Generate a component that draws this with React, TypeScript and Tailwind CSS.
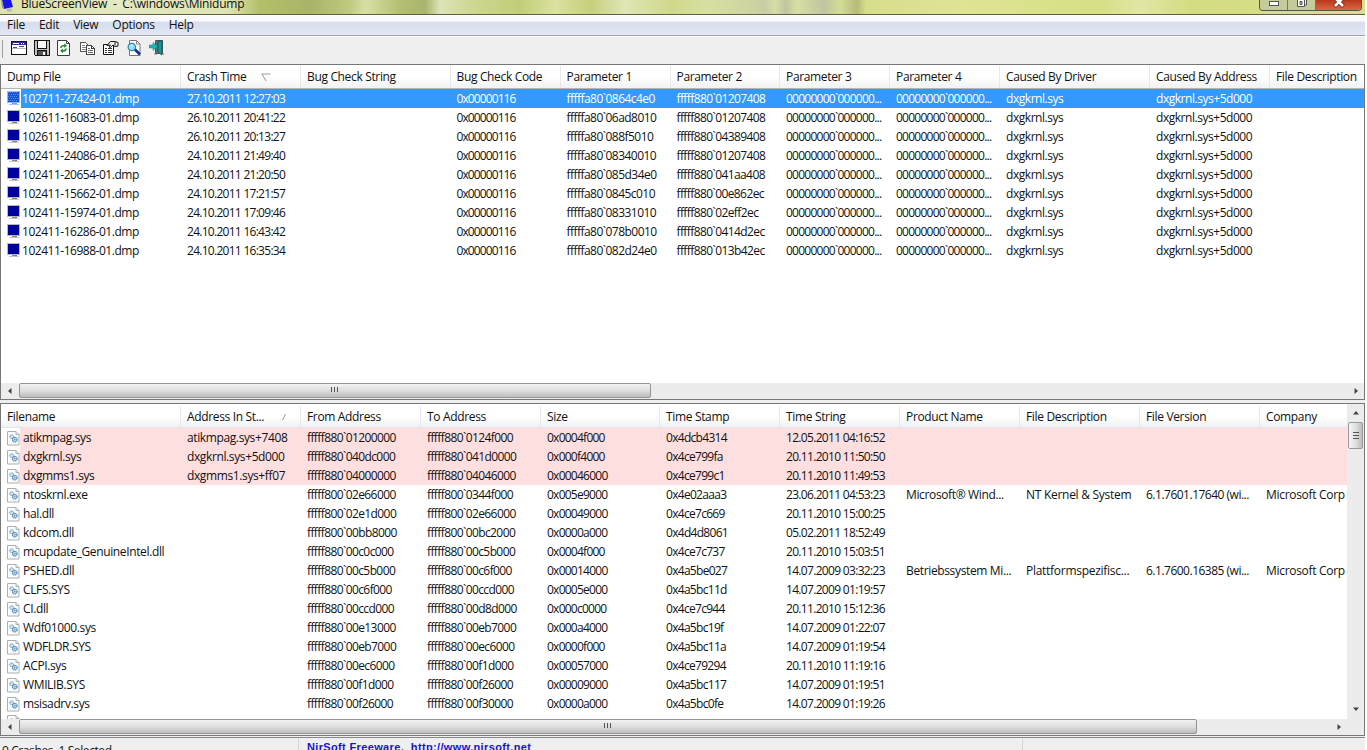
import type { ReactNode } from "react"
import { clsx } from "clsx"

type Column = { label: string; width: string; tracking: string; sort?: "down" | "slash" }

const crashColumns: Column[] = [
  { label: "Dump File", width: "w-[180px]", tracking: "tracking-[-0.48px]" },
  { label: "Crash Time", width: "w-[120px]", tracking: "tracking-[-0.72px]", sort: "down" },
  { label: "Bug Check String", width: "w-[149.5px]", tracking: "" },
  { label: "Bug Check Code", width: "w-[110px]", tracking: "tracking-[-0.9px]" },
  { label: "Parameter 1", width: "w-[110px]", tracking: "tracking-[-0.54px]" },
  { label: "Parameter 2", width: "w-[109.5px]", tracking: "tracking-[-0.6px]" },
  { label: "Parameter 3", width: "w-[110px]", tracking: "tracking-[-0.75px]" },
  { label: "Parameter 4", width: "w-[110px]", tracking: "tracking-[-0.75px]" },
  { label: "Caused By Driver", width: "w-[150px]", tracking: "tracking-[-0.45px]" },
  { label: "Caused By Address", width: "w-[120px]", tracking: "tracking-[-0.46px]" },
  { label: "File Description", width: "w-[95px]", tracking: "" },
]

const zeros = "00000000`000000..."

const crashes = [
  ["102711-27424-01.dmp", "27.10.2011 12:27:03", "fffffa80`0864c4e0", "fffff880`01207408"],
  ["102611-16083-01.dmp", "26.10.2011 20:41:22", "fffffa80`06ad8010", "fffff880`01207408"],
  ["102611-19468-01.dmp", "26.10.2011 20:13:27", "fffffa80`088f5010", "fffff880`04389408"],
  ["102411-24086-01.dmp", "24.10.2011 21:49:40", "fffffa80`08340010", "fffff880`01207408"],
  ["102411-20654-01.dmp", "24.10.2011 21:20:50", "fffffa80`085d34e0", "fffff880`041aa408"],
  ["102411-15662-01.dmp", "24.10.2011 17:21:57", "fffffa80`0845c010", "fffff880`00e862ec"],
  ["102411-15974-01.dmp", "24.10.2011 17:09:46", "fffffa80`08331010", "fffff880`02eff2ec"],
  ["102411-16286-01.dmp", "24.10.2011 16:43:42", "fffffa80`078b0010", "fffff880`0414d2ec"],
  ["102411-16988-01.dmp", "24.10.2011 16:35:34", "fffffa80`082d24e0", "fffff880`013b42ec"],
].map(([file, time, p1, p2]) => [file, time, "", "0x00000116", p1, p2, zeros, zeros, "dxgkrnl.sys", "dxgkrnl.sys+5d000", ""])

const driverColumns: Column[] = [
  { label: "Filename", width: "w-[180px]", tracking: "tracking-[-0.37px]" },
  { label: "Address In St...", width: "w-[120px]", tracking: "tracking-[-0.38px]", sort: "slash" },
  { label: "From Address", width: "w-[120px]", tracking: "tracking-[-0.6px]" },
  { label: "To Address", width: "w-[120px]", tracking: "tracking-[-0.6px]" },
  { label: "Size", width: "w-[119px]", tracking: "tracking-[-0.75px]" },
  { label: "Time Stamp", width: "w-[120px]", tracking: "tracking-[-0.7px]" },
  { label: "Time String", width: "w-[120px]", tracking: "tracking-[-0.68px]" },
  { label: "Product Name", width: "w-[120px]", tracking: "tracking-[-0.36px]" },
  { label: "File Description", width: "w-[120px]", tracking: "tracking-[-0.28px]" },
  { label: "File Version", width: "w-[120px]", tracking: "tracking-[-0.5px]" },
  { label: "Company", width: "w-[88px]", tracking: "tracking-[-0.3px]" },
]

const drivers = [
  ["atikmpag.sys", "atikmpag.sys+7408", "fffff880`01200000", "fffff880`0124f000", "0x0004f000", "0x4dcb4314", "12.05.2011 04:16:52"],
  ["dxgkrnl.sys", "dxgkrnl.sys+5d000", "fffff880`040dc000", "fffff880`041d0000", "0x000f4000", "0x4ce799fa", "20.11.2010 11:50:50"],
  ["dxgmms1.sys", "dxgmms1.sys+ff07", "fffff880`04000000", "fffff880`04046000", "0x00046000", "0x4ce799c1", "20.11.2010 11:49:53"],
  ["ntoskrnl.exe", "", "fffff800`02e66000", "fffff800`0344f000", "0x005e9000", "0x4e02aaa3", "23.06.2011 04:53:23", "Microsoft® Wind...", "NT Kernel & System", "6.1.7601.17640 (wi...", "Microsoft Corp"],
  ["hal.dll", "", "fffff800`02e1d000", "fffff800`02e66000", "0x00049000", "0x4ce7c669", "20.11.2010 15:00:25"],
  ["kdcom.dll", "", "fffff800`00bb8000", "fffff800`00bc2000", "0x0000a000", "0x4d4d8061", "05.02.2011 18:52:49"],
  ["mcupdate_GenuineIntel.dll", "", "fffff880`00c0c000", "fffff880`00c5b000", "0x0004f000", "0x4ce7c737", "20.11.2010 15:03:51"],
  ["PSHED.dll", "", "fffff880`00c5b000", "fffff880`00c6f000", "0x00014000", "0x4a5be027", "14.07.2009 03:32:23", "Betriebssystem Mi...", "Plattformspezifisc...", "6.1.7600.16385 (wi...", "Microsoft Corp"],
  ["CLFS.SYS", "", "fffff880`00c6f000", "fffff880`00ccd000", "0x0005e000", "0x4a5bc11d", "14.07.2009 01:19:57"],
  ["CI.dll", "", "fffff880`00ccd000", "fffff880`00d8d000", "0x000c0000", "0x4ce7c944", "20.11.2010 15:12:36"],
  ["Wdf01000.sys", "", "fffff880`00e13000", "fffff880`00eb7000", "0x000a4000", "0x4a5bc19f", "14.07.2009 01:22:07"],
  ["WDFLDR.SYS", "", "fffff880`00eb7000", "fffff880`00ec6000", "0x0000f000", "0x4a5bc11a", "14.07.2009 01:19:54"],
  ["ACPI.sys", "", "fffff880`00ec6000", "fffff880`00f1d000", "0x00057000", "0x4ce79294", "20.11.2010 11:19:16"],
  ["WMILIB.SYS", "", "fffff880`00f1d000", "fffff880`00f26000", "0x00009000", "0x4a5bc117", "14.07.2009 01:19:51"],
  ["msisadrv.sys", "", "fffff880`00f26000", "fffff880`00f30000", "0x0000a000", "0x4a5bc0fe", "14.07.2009 01:19:26"],
]

function MonitorIcon({ selected }: { selected?: boolean }) {
  return (
    <svg width="14" height="15" viewBox="0 0 14 15" className="shrink-0" shapeRendering="crispEdges">
      <rect x="0" y="0" width="13" height="12" fill={selected ? "#8fbcf0" : "#b9b9b9"} />
      <rect x="1" y="1" width="11" height="10" fill={selected ? "#1c50cf" : "#00009c"} />
      {selected &&
        Array.from({ length: 25 }, (_, i) => (
          <rect key={i} x={1 + (i % 5) * 2 + (Math.floor(i / 5) % 2)} y={1 + Math.floor(i / 5) * 2} width="1" height="1" fill="#4c91f5" />
        ))}
      <rect x="5" y="12" width="4" height="1" fill={selected ? "#6fa7e6" : "#888"} />
      <rect x="2" y="13" width="10" height="1" fill={selected ? "#9fc7f3" : "#c4c4c4"} />
      <rect x="8" y="12" width="2" height="1" fill={selected ? "#5e9de8" : "#777"} />
    </svg>
  )
}

function DriverIcon() {
  return (
    <svg width="13" height="16" viewBox="0 0 13 16" className="shrink-0">
      <path d="M.5 1.500h8.500l3 3v10.500H.5z" fill="#fafcfd" stroke="#a8b0b4" />
      <path d="M9 1.500v3h3" fill="#e5eaec" stroke="#a8b0b4" />
      <circle cx="4.7" cy="6.700" r="1.900" fill="#d5e6f2" stroke="#5a8db3" strokeDasharray="1.2 .5" />
      <circle cx="7.800" cy="9.700" r="2.300" fill="#c8dfef" stroke="#3d79a6" strokeWidth="1.100" strokeDasharray="1.2 .5" />
      <circle cx="7.800" cy="9.700" r=".6" fill="#3d79a6" />
    </svg>
  )
}

function ToolbarIcons() {
  return (
    <div className="flex h-[18px] items-start">
      {/* advanced options */}
      <svg width="23" height="18" viewBox="0 0 23 18" shapeRendering="crispEdges">
        <path d="M.5 1.500h15v13H.5z" fill="#fff" stroke="#111" />
        <path d="M1 2h14v3H1z" fill="#33338c" />
        <path d="M2 3h6v1H2zM10 3h1v1h-1zM12 3h1v1h-1z" fill="#fff" />
        <path d="M2 7h4v1H2zM8 6h5v1H8z" fill="#555" />
        <path d="M1 8h14v1H1z" fill="#bbb" />
      </svg>
      {/* save */}
      <svg width="23" height="18" viewBox="0 0 23 18" shapeRendering="crispEdges">
        <path d="M.5.5h15v15h-14l-1-1z" fill="#c3c3bd" stroke="#111" />
        <path d="M3.500.5h9v8h-9z" fill="#f7f7f7" stroke="#111" />
        <path d="M3.500 10.500h9v5h-9z" fill="#555" stroke="#111" />
        <path d="M9 11.500h2v3H9z" fill="#fff" />
      </svg>
      {/* refresh */}
      <svg width="23" height="18" viewBox="0 0 23 18">
        <path d="M.5.5h9l3 3v12H.5z" fill="#fff" stroke="#3c3c3c" />
        <path d="M9.500.5v3h3" fill="none" stroke="#3c3c3c" />
        <path d="M3.200 8c0-2.500 2-3.500 4-3V3.200L10 5.800 7.200 8V6.600C6 6.400 5 6.700 4.700 8z" fill="#1c8a36" />
        <path d="M9.900 8.500c0 2.500-2 3.500-4 3v1.800L3.100 10.700 5.900 8.500v1.400c1.200.2 2.200-.1 2.500-1.400z" fill="#1c8a36" />
      </svg>
      {/* copy */}
      <svg width="23" height="18" viewBox="0 0 23 18" shapeRendering="crispEdges">
        <path d="M.5 2.500h5l3 3v6h-8z" fill="#fff" stroke="#555" />
        <path d="M2 5.500h3M2 7.500h4M2 9.500h4" stroke="#888" />
        <path d="M6.500 5.500h5l3 3v6h-8z" fill="#fff" stroke="#444" />
        <path d="M11.500 5.500v3h3" fill="none" stroke="#444" />
        <path d="M8 8.500h2M8 10.500h5M8 12.500h5" stroke="#666" />
      </svg>
      {/* properties */}
      <svg width="24" height="18" viewBox="0 0 24 18">
        <path d="M.5 4.500h10v10H.5z" fill="#fff" stroke="#111" />
        <path d="M2 8.500h2M5 8.500h4M2 10.500h2M5 10.500h4M2 12.500h2M5 12.500h4" stroke="#333" />
        <path d="M4 5.500 7.500 1.500h4l3.500 1v3.500l-3 .5-2-1.500-2.500 2.500-1.500-.5 1.500-2z" fill="#fff" stroke="#111" />
        <path d="M12 1.500v4" stroke="#111" />
      </svg>
      {/* find */}
      <svg width="22" height="18" viewBox="0 0 22 18">
        <path d="M2.500.5h7l3.500 3.500v11.500H2.500z" fill="#fff" stroke="#777" />
        <path d="M9.500.5V4H13" fill="none" stroke="#888" />
        <circle cx="4.800" cy="7" r="3.700" fill="#8de4ee" stroke="#3682a4" strokeWidth="1.200" />
        <path d="M3.500 6.500 5.500 4.800" stroke="#fff" />
        <path d="m8 9.500 5 5" stroke="#16308f" strokeWidth="2.600" />
      </svg>
      {/* exit */}
      <svg width="17" height="18" viewBox="0 0 17 18">
        <path d="M6.500.5h7v13h-7z" fill="#4e7575" stroke="#555" />
        <path d="m9 1.500 4-1v14.500l-4-2.500z" fill="#1d9292" stroke="#0b5557" strokeWidth=".8" />
        <path d="M0 5h4V2.500l4.500 4L4 10.500V8H0z" fill="#19b5bd" stroke="#138990" strokeWidth=".5" />
        <path d="M5 14h3M13 14h2" stroke="#777" />
      </svg>
    </div>
  )
}

function HeaderRow({ columns, tinted }: { columns: Column[]; tinted?: boolean }) {
  return (
    <div
      className={clsx(
        "flex h-6 shrink-0 overflow-hidden border-b bg-linear-to-b from-white from-50% to-[#f1f2f3] tracking-[-0.34px]",
        tinted ? "border-[#e3e6ea] pt-0.5" : "border-[#b5b5b5] pt-px",
      )}
    >
      {columns.map((column) => (
        <div key={column.label} className={clsx("flex shrink-0 items-center border-r border-[#e6e8ea] pl-1.5 last:border-r-0", column.width)}>
          <span className="whitespace-pre">{column.label}</span>
          {column.sort === "down" && (
            <svg width="10" height="9" viewBox="0 0 10 9" className="ml-[15px]">
              <path d="M.5 1h9M1 1l4 7" fill="none" stroke="#999" />
            </svg>
          )}
          {column.sort === "slash" && (
            <svg width="6" height="8" viewBox="0 0 6 8" className="ml-[17px]">
              <path d="M1.500 7 4.500 1" stroke="#999" />
            </svg>
          )}
        </div>
      ))}
    </div>
  )
}

type DataRowProps = { columns: Column[]; cells: string[]; icon: ReactNode; iconGap: string; className?: string }

function DataRow({ columns, cells, icon, iconGap, className }: DataRowProps) {
  return (
    <div className={clsx("flex shrink-0 overflow-hidden", className)}>
      {columns.map((column, i) => (
        <div key={column.label} className={clsx("flex shrink-0 items-center whitespace-pre pl-1.5", column.width, column.tracking)}>
          {i === 0 && icon}
          <span className={clsx("pt-px", i === 0 && iconGap)}>{cells[i]}</span>
        </div>
      ))}
    </div>
  )
}

function Arrow({ d }: { d: string }) {
  return (
    <svg width="8" height="8" viewBox="0 0 8 8" className="shrink-0">
      <path d={d} fill="#444" />
    </svg>
  )
}

function HorizontalScrollbar({ thumb, end }: { thumb: string; end: string }) {
  return (
    <div className="flex h-4 shrink-0 items-start bg-[#ececec]">
      <div className="flex h-[15px] w-[18px] shrink-0 items-center justify-center">
        <Arrow d="M5.500 1v6L2 4z" />
      </div>
      <div
        className={clsx(
          "flex h-[15px] items-center justify-center gap-px rounded-xs border border-[#959595] bg-linear-to-b from-[#f3f3f3] via-[#dfdfdf] to-[#bdbdbd]",
          thumb,
        )}
      >
        <i className="mb-0.5 h-[5px] w-0.5 border-l border-[#555]" />
        <i className="mb-0.5 h-[5px] w-0.5 border-l border-[#555]" />
        <i className="mb-0.5 h-[5px] w-0.5 border-l border-[#555]" />
      </div>
      <div className={clsx("ml-auto flex h-[15px] items-center", end)}>
        <Arrow d="M2.500 1v6L6 4z" />
      </div>
    </div>
  )
}

function TitleBar() {
  return (
    <div className="flex h-[15px] shrink-0 justify-between overflow-hidden border-b border-[#5f5f45] bg-[linear-gradient(90deg,#dce2aa_0px,#e5e9c4_120px,#dde3b0_230px,#b4bf68_260px,#a9b468_310px,#c2c980_350px,#d9dfa4_365px,#b4bf72_400px,#a9b56c_425px,#dde3b7_440px,#ced690_475px,#c3cd78_520px,#dbe1a0_555px,#c6cf7c_590px,#e1e5b7_625px,#d0d88b_670px,#d9dfa2_710px,#cfd3a1_750px,#c8cea3_765px,#d8dda8_775px,#c0c59f_786px,#d9dea4_797px,#c0c59f_824px,#d5dc96_840px,#b5bb78_857px,#d6dd8b_866px,#dfe494_960px,#d6df85_1100px,#e2e6a5_1140px,#d4dc82_1190px,#d9e08b_1364px)]">
      <div className="flex pl-px">
        <svg width="14" height="12" viewBox="0 0 14 12">
          <path d="M1 0h9l2 7-9 2z" fill="#1414e6" />
          <path d="M0 0h1l2 9-2-1z" fill="#999" />
          <path d="m5 9 5-1 1 3-4 1z" fill="#b9b9b9" />
        </svg>
        <span className="-mt-[5px] ml-1.5 whitespace-pre text-[12px] leading-[18px] tracking-[-0.22px]">BlueScreenView  -  C:\windows\Minidump</span>
      </div>
      <div className="mr-[3px] flex h-[11px] w-[103px] overflow-hidden rounded-b border border-t-0 border-[#54573c]">
        <div className="flex w-7 justify-center border-r border-[#777a58] bg-[#c4ca98]">
          <i className="mt-px h-[5px] w-2.5 border border-[#555] bg-white" />
        </div>
        <div className="flex w-7 justify-center border-r border-[#777a58] bg-[#c4ca98]">
          <svg width="12" height="8" viewBox="0 0 12 8">
            <path d="M3.500-2h7v7h-7z" fill="#eee" stroke="#555" />
            <path d="M1.500-1h7v7.500h-7z" fill="#fff" stroke="#555" />
            <path d="M4 1.500h2v3H4z" fill="#bbb" stroke="#555" />
          </svg>
        </div>
        <div className="flex flex-1 justify-center bg-linear-to-b from-[#b9361b] to-[#dc6843]">
          <svg width="12" height="8" viewBox="0 0 12 8">
            <path d="m1.500 6.500 9-9M10.500 6.500l-9-9" stroke="#743124" strokeWidth="4" />
            <path d="m2 6 8-8M10 6 2-2" stroke="#fff" strokeWidth="2.500" />
          </svg>
        </div>
      </div>
    </div>
  )
}

export default function App() {
  return (
    <div className="h-[750px] w-[1367px] overflow-hidden bg-white font-['Open_Sans','Noto_Sans',sans-serif] text-[12px] leading-none text-[#111]">
      <div className="flex h-full w-[1365px] flex-col bg-[#f0eff0]">
        <TitleBar />
        <div className="flex h-[21px] shrink-0 items-center gap-3.5 border-y border-t-white border-b-[#9ca3b2] bg-linear-to-b from-[#fafafd] from-25% via-[#d6ddec] via-35% to-[#e2e7f3] pb-px pl-[7px] tracking-[-0.27px]">
          <span>File</span>
          <span>Edit</span>
          <span>View</span>
          <span>Options</span>
          <span>Help</span>
        </div>
        <div className="flex h-7 shrink-0 items-center border-t border-white pb-[3px] pl-0.5">
          <div className="mr-2 h-[18px] w-px bg-[#a0a0a0]" />
          <ToolbarIcons />
        </div>

        <div className="flex h-[336px] shrink-0 flex-col border border-[#777] bg-white">
          <HeaderRow columns={crashColumns} />
          {crashes.map((cells, i) => (
            <DataRow
              key={cells[0]}
              columns={crashColumns}
              cells={cells}
              icon={<MonitorIcon selected={i === 0} />}
              iconGap="pl-px"
              className={i === 0 ? "h-[19px] bg-linear-to-r from-white from-[20px] to-[#3399ff] to-[20px] text-white" : "h-[18.95px]"}
            />
          ))}
          <div className="flex-1" />
          <HorizontalScrollbar thumb="w-[632px]" end="mr-1" />
        </div>

        <div className="mt-[3px] flex h-[333px] shrink-0 flex-col border border-[#777] bg-white">
          <div className="flex min-h-0 flex-1">
            <div className="flex w-[1346px] flex-col overflow-hidden">
              <HeaderRow columns={driverColumns} tinted />
              {drivers.map((cells, i) => (
                <DataRow
                  key={cells[0]}
                  columns={driverColumns}
                  cells={cells}
                  icon={<DriverIcon />}
                  iconGap="pl-[3px]"
                  className={clsx("h-[19px]", i < 3 && "bg-linear-to-r from-white from-[19px] to-[#fddfe0] to-[19px]")}
                />
              ))}
              <div className="pt-px pl-1.5">
                <DriverIcon />
              </div>
            </div>
            <div className="flex flex-1 flex-col items-center bg-[#ececec]">
              <div className="flex h-[18px] items-center">
                <Arrow d="M1 5.500h6L4 2z" />
              </div>
              <div className="flex h-[27px] w-[15px] flex-col items-center justify-center gap-px rounded-xs border border-[#999] bg-linear-to-r from-[#f5f5f5] via-[#e1e1e1] to-[#bebebe]">
                <i className="h-0.5 w-1.5 border-t border-[#555]" />
                <i className="h-0.5 w-1.5 border-t border-[#555]" />
                <i className="h-0.5 w-1.5 border-t border-[#555]" />
              </div>
              <div className="mt-auto mb-1.5">
                <Arrow d="M1 2.500h6L4 6z" />
              </div>
            </div>
          </div>
          <HorizontalScrollbar thumb="w-[1178px]" end="mr-[21px]" />
        </div>

        <div className="mt-px flex h-[25px] shrink-0 border-t border-[#888]">
          <div className="w-[299px] border-r border-[#d5d5d5] pt-[7px] pl-0.5 tracking-[-0.4px]">9 Crashes, 1 Selected</div>
          <div className="w-[724px] border-r border-[#d5d5d5] pt-1 pl-2 font-['Liberation_Sans',sans-serif] text-[11px] font-bold tracking-[0.35px] whitespace-pre text-[#1414d0]">
            NirSoft Freeware.  http://www.nirsoft.net
          </div>
        </div>
      </div>
    </div>
  )
}
